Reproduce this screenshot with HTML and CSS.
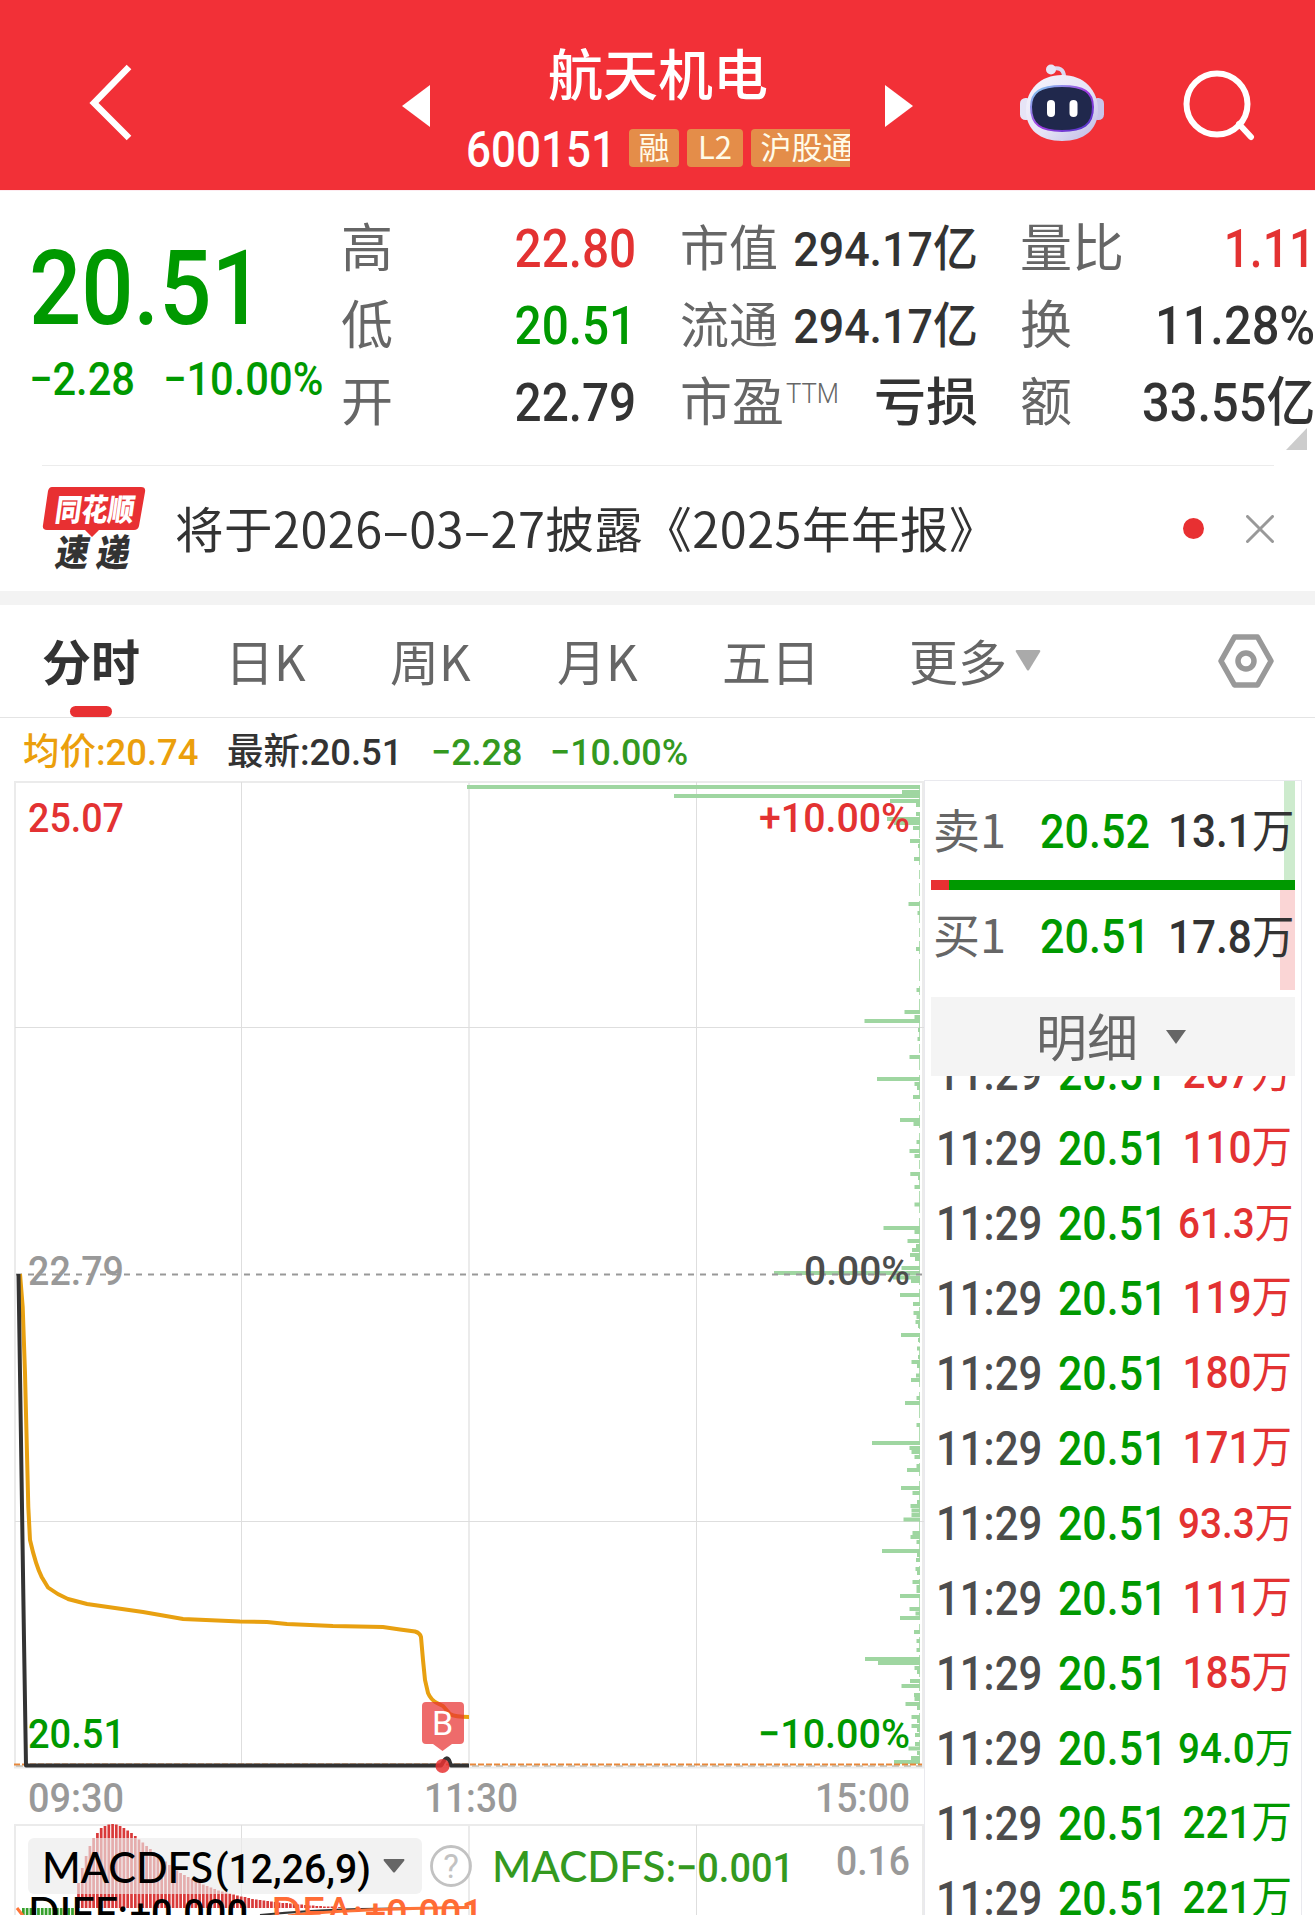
FILE: index.html
```html
<!DOCTYPE html>
<html lang="zh-CN">
<head>
<meta charset="utf-8">
<title>航天机电 600151</title>
<link rel="stylesheet" href="styles.css">
</head>
<body>
<header class="topbar">
  <svg class="back" viewBox="0 0 50 90" width="50" height="90"><path d="M43 10 8 46 43 81" fill="none" stroke="#fff" stroke-width="6.5"/></svg>
  <svg class="prev" viewBox="0 0 28 42" width="28" height="42"><path d="M28 0V42L0 21z" fill="#fff"/></svg>
  <div class="stock">
    <h1 class="stock-name">航天机电</h1>
    <div class="stock-meta">
      <span class="stock-code"><span class="sq">600151</span></span>
      <span class="badge b1">融</span><span class="badge b2">L2</span><span class="badge b3">沪股通</span>
    </div>
  </div>
  <svg class="next" viewBox="0 0 28 42" width="28" height="42"><path d="M0 0V42L28 21z" fill="#fff"/></svg>
  <svg class="robot" viewBox="0 0 84 78" width="84" height="78">
    <defs>
      <linearGradient id="shell" x1="0" y1="0" x2="1" y2="1"><stop offset="0" stop-color="#f6f5fd"/><stop offset=".55" stop-color="#e6e3f6"/><stop offset="1" stop-color="#bdb8e4"/></linearGradient>
      <linearGradient id="rim" x1="0" y1="0" x2="1" y2="1"><stop offset="0" stop-color="#7fdcf2"/><stop offset=".5" stop-color="#a23be0"/><stop offset="1" stop-color="#4636c8"/></linearGradient>
    </defs>
    <path d="M31 5c8-2 13 0 13 8" fill="none" stroke="#dcd9f1" stroke-width="4"/>
    <circle cx="31" cy="5.500" r="5" fill="#e7e5f6"/>
    <rect x="0" y="34" width="12" height="22" rx="5.500" fill="#e6e4f6"/>
    <rect x="72" y="34" width="12" height="22" rx="5.500" fill="#c9c5ea"/>
    <path d="M42 11C64 11 78 26 78 46S64 77 42 77 6 66 6 46 20 11 42 11z" fill="url(#shell)"/>
    <path d="M42 22C64 22 73 28 73 43 73 61 63 67 42 67S11 61 11 43C11 28 20 22 42 22z" fill="#20284c" stroke="url(#rim)" stroke-width="2"/>
    <rect x="27" y="36" width="8" height="17" rx="4" fill="#fff"/><rect x="49.500" y="36" width="8" height="17" rx="4" fill="#fff"/>
  </svg>
  <svg class="search" viewBox="0 0 74 72" width="74" height="72"><g fill="none" stroke="#fff" stroke-width="6"><ellipse cx="35" cy="35" rx="30.500" ry="30.500"/><path d="M57 55 69 68" stroke-linecap="round"/></g></svg>
</header>

<section class="quote">
  <div class="last">
    <div class="last-price down"><span class="sq">20.51</span></div>
    <div class="last-change down"><span class="sq chg-a">−2.28</span><span class="sq chg-b">−10.00%</span></div>
  </div>
  <dl class="stats s1">
    <dt>高</dt><dd class="up"><span class="sr">22.80</span></dd>
    <dt>低</dt><dd class="down"><span class="sr">20.51</span></dd>
    <dt>开</dt><dd><span class="sr">22.79</span></dd>
  </dl>
  <dl class="stats s2">
    <dt class="small">市值</dt><dd class="small"><span class="sr">294.17<i>亿</i></span></dd>
    <dt class="small">流通</dt><dd class="small"><span class="sr">294.17<i>亿</i></span></dd>
    <dt>市盈<sup>TTM</sup></dt><dd>亏损</dd>
  </dl>
  <dl class="stats s3">
    <dt>量比</dt><dd class="up ratio"><span class="sr">1.11</span></dd>
    <dt>换</dt><dd><span class="sr">11.28%</span></dd>
    <dt>额</dt><dd><span class="sr">33.55<i>亿</i></span></dd>
  </dl>
  <svg class="expand" viewBox="0 0 21 22" width="21" height="22"><path d="M21 0V22H0z" fill="#ccc"/></svg>
</section>

<section class="notice">
  <svg class="notice-logo" viewBox="0 0 104 86" width="104" height="86">
    <path d="M10 1H99q5 0 4 5L97 40q-1 4-5 4H57L50 51 43 44H5q-5 0-4-5L6 5q1-4 4-4z" fill="#e83032"/>
    <text class="logo-top" transform="translate(12 35) skewX(-8)" textLength="79" lengthAdjust="spacingAndGlyphs">同花顺</text>
    <text class="logo-bottom" transform="translate(12 80) skewX(-10)" textLength="33" lengthAdjust="spacingAndGlyphs">速</text>
    <text class="logo-bottom" transform="translate(53 80) skewX(-10)" textLength="33" lengthAdjust="spacingAndGlyphs">递</text>
  </svg>
  <p class="notice-text">将于2026<b>–</b>03<b>–</b>27披露《2025年年报》</p>
  <span class="notice-dot"></span>
  <svg class="notice-close" viewBox="0 0 28 28" width="28" height="28"><path d="M1.500 1.500 26.500 26.500M26.500 1.500 1.500 26.500" stroke="#999" stroke-width="3" stroke-linecap="round"/></svg>
</section>

<nav class="tabs">
  <a class="tab active">分时</a><a class="tab">日K</a><a class="tab">周K</a><a class="tab">月K</a><a class="tab">五日</a>
  <a class="tab more">更多<svg viewBox="0 0 26 21" width="26" height="21"><path d="M2 0H24q2 0 1 2L14 20q-1 1-2 0L1 2Q0 0 2 0z" fill="#aaa"/></svg></a>
  <svg class="gear" viewBox="0 0 56 56" width="56" height="56"><g fill="none" stroke="#999" stroke-width="5.500"><path d="M16.500 4H39.500L53 28 39.500 52H16.500L3 28z" stroke-linejoin="round"/><circle cx="28" cy="28" r="8"/></g></svg>
</nav>

<div class="legend">
  <span class="avg"><span class="sq">均价:20.74</span></span>
  <span><span class="sq">最新:20.51</span></span>
  <span class="soft"><span class="sq">−2.28</span></span>
  <span class="soft"><span class="sq">−10.00%</span></span>
</div>

<main class="board">
<svg class="chart" viewBox="0 780 924 1135" width="924" height="1135">
  <g fill="none" stroke="#ebebeb" stroke-width="2">
    <path d="M14 782H924M15 782V1767M469 782V1767M923 782V1767M14 1767.500H924M14 1825H924M15 1825V1915M469 1825V1915M923 1825V1915" />
    <path d="M241.500 782V1767M696.500 782V1767M15 1027.500H924M15 1521.500H924M241.500 1825V1915M696.500 1825V1915" stroke="#dedede" stroke-width="1"/>
  </g>
  <path stroke="#9fd6a1" stroke-width="4" d="M920 787h-453M920 792h-18M920 796h-246M920 801h-30M920 805h-4M920 814h-4M920 819h-33M920 823h-26M920 828h-7M920 841h-10M920 846h-2M920 859h-6M920 904h-11.500M920 913h-2.500M920 949h-4M920 990h-3.500M920 1012h-15.500M920 1017h-5.500M920 1021h-55.500M920 1030h-2M920 1039h-2.500M920 1057h-10.500M920 1079h-43M920 1084h-5.500M920 1088h-3M920 1097h-7M920 1120h-20M920 1124h-6.500M920 1142h-3.500M920 1151h-10.500M920 1156h-5.500M920 1174h-9.700M920 1178h-2M920 1187h-5.500M920 1204.500h-5.500M920 1228h-36.500M920 1232h-5.500M920 1241h-12.500M920 1246h-4M920 1250h-8M920 1255h-10M920 1259h-5M920 1268h-18.500M920 1273h-146M920 1277.500h-27M920 1281h-9M920 1295h-20M920 1304h-7M920 1313h-6.500M920 1317h-3.500M920 1322h-4.500M920 1326h-2M920 1335h-19M920 1340h-2M920 1348.500h-3M920 1357h-2M920 1362h-8.500M920 1366h-3M920 1375.500h-4M920 1380h-9M920 1398h-3.500M920 1403h-15M920 1425h-3.500M920 1443h-48M920 1448h-10.500M920 1452h-8.500M920 1457h-5.500M920 1466h-3.500M920 1470h-13M920 1488h-19M920 1493h-7.500M920 1502h-3M920 1506h-9.500M920 1510.500h-8.500M920 1515h-8.500M920 1519.500h-16.500M920 1533h-7.500M920 1537h-9.500M920 1542h-3.500M920 1551h-38M920 1555h-3M920 1560h-4M920 1569h-4.500M920 1573h-3M920 1582h-7.500M920 1587h-3.500M920 1591h-3.500M920 1596h-20M920 1609h-10.500M920 1613.500h-4.500M920 1618h-20M920 1632h-6M920 1641h-3.500M920 1650h-3.500M920 1659h-55M920 1663h-42M920 1668h-5.500M920 1672h-3M920 1681h-10M920 1686h-18.500M920 1695h-6M920 1699h-5.500M920 1704h-14.500M920 1708h-3M920 1717h-8.500M920 1721h-3M920 1726h-8.500M920 1730h-3M920 1735h-5M920 1744h-5M920 1748.500h-11.500M920 1753h-3M920 1758h-9M920 1762h-26"/>
  <path d="M919.500 785V1765" stroke="#9fd6a1" stroke-dasharray="22 5 9 4 13 5" opacity=".8"/>
  <path d="M16 1274.500H922" stroke="#999" stroke-width="2" stroke-dasharray="6 6"/>
  <path d="M14 1764.500H922" stroke="#e8873a" stroke-width="2" stroke-dasharray="6 2"/>
  <path d="M16 1766H922" stroke="#aaa08e" stroke-width="1" stroke-dasharray="7 5"/>
  <path d="M20 1274 22.700 1307 25 1373 28.300 1507 30 1540Q36 1566 41.700 1577L48 1587.500Q58 1595 68 1599L87 1604 143 1612 183 1619 240 1621.500 267 1622 287 1624 333 1626 383 1627 400 1629.500 415 1631.500Q420 1633 421 1637L423 1660 425 1680 428 1693Q431 1700 437 1703L443 1706 450 1714Q455 1717 469 1717" fill="none" stroke="#e8a010" stroke-width="4"/>
  <path d="M18.500 1274 24 1640 26 1765.500H441L444.500 1760Q447 1756.500 449 1760L451 1765.500H469" fill="none" stroke="#333" stroke-width="4" stroke-linejoin="round"/>
  <g fill="#e83232"><path d="M426 1702H460q4 0 4 4V1740q0 4-4 4H452L442.500 1751 433 1744H426q-4 0-4-4V1706q0-4 4-4z" opacity=".72"/><circle cx="442.500" cy="1766" r="7" opacity=".85"/></g>
  <text class="mark" x="442.500" y="1735" text-anchor="middle">B</text>

  <g class="axis">
    <text class="t-up" x="28" y="832" textLength="96" lengthAdjust="spacingAndGlyphs">25.07</text>
    <text class="t-up" x="759" y="832" textLength="151" lengthAdjust="spacingAndGlyphs">+10.00%</text>
    <text class="t-mute" x="28" y="1285" textLength="96" lengthAdjust="spacingAndGlyphs">22.79</text>
    <text class="t-dark" x="804" y="1285" textLength="106" lengthAdjust="spacingAndGlyphs">0.00%</text>
    <text class="t-down" x="28" y="1748" textLength="97" lengthAdjust="spacingAndGlyphs">20.51</text>
    <text class="t-down" x="758" y="1748" textLength="152" lengthAdjust="spacingAndGlyphs">−10.00%</text>
    <text class="t-mute" x="28" y="1812" textLength="96" lengthAdjust="spacingAndGlyphs">09:30</text>
    <text class="t-mute" x="424" y="1812" textLength="94" lengthAdjust="spacingAndGlyphs">11:30</text>
    <text class="t-mute" x="815" y="1812" textLength="95" lengthAdjust="spacingAndGlyphs">15:00</text>
  </g>

  <path stroke="#d93a3a" stroke-width="2.700" d="M78.500 1908V1883M82.300 1908V1868M86.100 1908V1856M89.900 1908V1846M93.600 1908V1838M97.400 1908V1833M101.200 1908V1828M105 1908V1826M108.800 1908V1824.500M112.600 1908V1824M116.300 1908V1824.500M120.100 1908V1826M123.900 1908V1828M127.700 1908V1830.500M131.500 1908V1833M135.300 1908V1836M139 1908V1839.500M142.800 1908V1842.500M146.600 1908V1846M150.400 1908V1849M154.200 1908V1852M157.900 1908V1855M161.700 1908V1858M165.500 1908V1861.500M169.300 1908V1865M173.100 1908V1868M176.900 1908V1870.500M180.600 1908V1873M184.400 1908V1875M188.200 1908V1877M192 1908V1879M195.800 1908V1881M199.600 1908V1882.500M203.300 1908V1884.500M207.100 1908V1886M210.900 1908V1887.500M214.700 1908V1889M218.500 1908V1890.500M222.300 1908V1891.500M226 1908V1892.500M229.800 1908V1893.500M233.600 1908V1894.500M237.400 1908V1895.500M241.200 1908V1896.500M245 1908V1897M248.700 1908V1898M252.500 1908V1899M256.300 1908V1899.500M260.100 1908V1900M263.900 1908V1900.500M267.700 1908V1901M271.400 1908V1901.500M275.200 1908V1902M279 1908V1902.500M282.800 1908V1903M286.600 1908V1903M290.400 1908V1903.500M294.100 1908V1904M297.900 1908V1904.500M301.700 1908V1904.500M305.500 1908V1905M309.300 1908V1905.500M313.100 1908V1905.500M316.800 1908V1906M320.600 1908V1906M324.400 1908V1906.500M328.200 1908V1906.500M332 1908V1906.500M335.700 1908V1907M339.500 1908V1907M343.300 1908V1907"/>
  <path d="M22 1911.500H74" stroke="#36a02c" stroke-width="7" stroke-dasharray="2.700 1.080"/>
  <path d="M260 1915Q310 1910 360 1909L469 1907.500" fill="none" stroke="#333" stroke-width="2"/>
  <path d="M17 1908 24 1917M288 1916Q340 1909 469 1907.500" fill="none" stroke="#ff7438" stroke-width="3"/>
  <rect x="28" y="1838" width="394" height="56" rx="6" fill="#ebebeb" fill-opacity=".65"/>
  <text class="ind-word" x="42" y="1883" textLength="171" lengthAdjust="spacingAndGlyphs">MACDFS</text>
  <text class="ind-num" x="215" y="1883" textLength="156" lengthAdjust="spacingAndGlyphs">(12,26,9)</text>
  <path d="M384 1859H404q1 1 0 2L395 1872q-1 1-2 0L384 1861q-1-1 0-2z" fill="#666"/>
  <circle cx="451" cy="1866" r="19.500" fill="none" stroke="#c2c2c2" stroke-width="2.800"/>
  <text class="help" x="451" y="1877.500" text-anchor="middle">?</text>
  <g fill="#34991f">
    <text class="ind-word" x="492" y="1882" textLength="184" lengthAdjust="spacingAndGlyphs">MACDFS:</text>
    <text class="ind-num" x="676" y="1882" textLength="118" lengthAdjust="spacingAndGlyphs">−0.001</text>
  </g>
  <text class="ind-num t-mute" x="836" y="1875" textLength="74" lengthAdjust="spacingAndGlyphs">0.16</text>
  <text class="ind-word" x="28" y="1928" textLength="100" lengthAdjust="spacingAndGlyphs">DIFF:</text>
  <text class="ind-num" x="130" y="1928" textLength="118" lengthAdjust="spacingAndGlyphs">+0.000</text>
  <g fill="#ff6b35">
    <text class="ind-word" x="271" y="1928" textLength="92" lengthAdjust="spacingAndGlyphs">DEA:</text>
    <text class="ind-num" x="365" y="1928" textLength="118" lengthAdjust="spacingAndGlyphs">+0.001</text>
  </g>
</svg>

<aside class="book">
  <div class="level sell"><span class="side">卖1</span><span class="px down"><span class="sq">20.52</span></span><span class="qty"><span class="sr">13.1<i>万</i></span></span></div>
  <div class="ratio-bar"></div>
  <div class="level buy"><span class="side">买1</span><span class="px down"><span class="sq">20.51</span></span><span class="qty"><span class="sr">17.8<i>万</i></span></span></div>
  <div class="detail">明细<svg viewBox="0 0 20 14" width="20" height="14"><path d="M0 0H20L10 14z" fill="#666"/></svg></div>
  <div class="ticks"><div class="ticks-inner">
    <div class="tick"><time><span class="sq">11:29</span></time><span class="px down"><span class="sq">20.51</span></span><span class="vol up"><span class="sr">267<i>万</i></span></span></div>
    <div class="tick"><time><span class="sq">11:29</span></time><span class="px down"><span class="sq">20.51</span></span><span class="vol up"><span class="sr">110<i>万</i></span></span></div>
    <div class="tick"><time><span class="sq">11:29</span></time><span class="px down"><span class="sq">20.51</span></span><span class="vol dec up"><span class="sr">61.3<i>万</i></span></span></div>
    <div class="tick"><time><span class="sq">11:29</span></time><span class="px down"><span class="sq">20.51</span></span><span class="vol up"><span class="sr">119<i>万</i></span></span></div>
    <div class="tick"><time><span class="sq">11:29</span></time><span class="px down"><span class="sq">20.51</span></span><span class="vol up"><span class="sr">180<i>万</i></span></span></div>
    <div class="tick"><time><span class="sq">11:29</span></time><span class="px down"><span class="sq">20.51</span></span><span class="vol up"><span class="sr">171<i>万</i></span></span></div>
    <div class="tick"><time><span class="sq">11:29</span></time><span class="px down"><span class="sq">20.51</span></span><span class="vol dec up"><span class="sr">93.3<i>万</i></span></span></div>
    <div class="tick"><time><span class="sq">11:29</span></time><span class="px down"><span class="sq">20.51</span></span><span class="vol up"><span class="sr">111<i>万</i></span></span></div>
    <div class="tick"><time><span class="sq">11:29</span></time><span class="px down"><span class="sq">20.51</span></span><span class="vol up"><span class="sr">185<i>万</i></span></span></div>
    <div class="tick"><time><span class="sq">11:29</span></time><span class="px down"><span class="sq">20.51</span></span><span class="vol dec down"><span class="sr">94.0<i>万</i></span></span></div>
    <div class="tick"><time><span class="sq">11:29</span></time><span class="px down"><span class="sq">20.51</span></span><span class="vol down"><span class="sr">221<i>万</i></span></span></div>
    <div class="tick"><time><span class="sq">11:29</span></time><span class="px down"><span class="sq">20.51</span></span><span class="vol down"><span class="sr">221<i>万</i></span></span></div>
  </div></div>
</aside>
</main>
</body>
</html>
```
FILE: styles.css
```css
* { box-sizing: border-box; margin: 0; padding: 0; }
html, body { width: 1315px; height: 1915px; overflow: hidden; }
body {
  display: flex; flex-direction: column; background: #fff; color: #333;
  font-family: Roboto, "Noto Sans CJK SC", sans-serif;
}
svg { display: block; flex: none; }
i { font-style: normal; font-weight: 400; }
.up { color: #e33232; }
.down { color: #009900; }

/* condensed numerals: .sq keeps the left edge, .sr keeps the right edge */
.sq, .sr { display: inline-block; white-space: nowrap; font-weight: 500; }
.sq { transform: scaleX(.92); transform-origin: left center; }
.sr { transform: scaleX(.92); transform-origin: right center; }

.topbar { flex: none; height: 190px; display: flex; background: #f23037; color: #fff; }
.back { margin: 57px 0 0 86px; }
.prev { margin: 85px 0 0 266px; }
.stock { width: 385px; margin: 0 35px 0 35px; padding-top: 39px; overflow: hidden; }
.stock-name { font: 500 55px/64px "Noto Sans CJK SC", sans-serif; text-align: center; margin-right: -1px; height: 64px; }
.stock-meta { display: flex; height: 40px; margin-top: 26px; }
.stock-code { width: 164px; padding-left: 1px; font-size: 50px; line-height: 42px; }
.stock-code .sq { transform: scaleX(.88); }
.badge { flex: none; height: 38px; margin-right: 8px; border-radius: 4px; background: #e48d49; color: #fffbe8; font: 400 31px/34px "Noto Sans CJK SC", sans-serif; text-align: center; white-space: nowrap; }
.b1 { width: 50px; }
.b2 { width: 56px; }
.b3 { width: 112px; }
.next { margin-top: 85px; }
.robot { margin: 64px 0 0 107px; }
.search { margin: 69px 0 0 78px; }

.quote { position: relative; flex: none; height: 275px; display: flex; border-top: 1px solid #fdecf1; }
.last { width: 341px; padding: 43px 0 0 29px; }
.last-price { font-size: 104px; line-height: 110px; height: 110px; }
.last-price .sq { transform: scaleX(.885); }
.last-change { display: flex; margin-top: 10px; font-size: 46px; line-height: 50px; }
.last-change .sq { transform: scaleX(.905); }
.chg-a { width: 134px; }
.stats { display: grid; grid-template-columns: auto 1fr; grid-auto-rows: 77px; padding-top: 20px; font-size: 53px; line-height: 77px; }
.stats dt { color: #666; font-size: 52px; white-space: nowrap; }
.stats dd { text-align: right; font-weight: 500; white-space: nowrap; font-size: 53px; }
.stats i { font-weight: 500; }
.stats .small { font-size: 49px; }
.stats .small .sr { transform: scaleX(.915); }
.s1 { width: 295px; }
.s1 .sr { transform: scaleX(.9); }
.s2 { width: 298px; margin-left: 44px; grid-template-columns: 94px 204px; }
.s2 dd:last-child { font-size: 52px; }
.s3 { width: 295px; margin-left: 42px; }
.stats .ratio .sr { transform: scaleX(.87); }
.stats sup { display: inline-block; margin-left: 2px; font-size: 27px; font-weight: 300; line-height: 30px; vertical-align: 18px; transform: scaleX(.95); transform-origin: left; }
.expand { position: absolute; right: 8px; bottom: 15px; }

.notice { flex: none; height: 126px; margin: 0 41px 0 42px; border-top: 1px solid #ececec; display: flex; align-items: center; }
.logo-top { font: 900 31px "Noto Sans CJK SC", sans-serif; fill: #fff; }
.logo-bottom { font: 900 37px "Noto Sans CJK SC", sans-serif; fill: #333; }
.notice-text { width: 1037px; padding-left: 29px; font: 400 48.5px/70px "Noto Sans CJK SC", sans-serif; letter-spacing: .5px; padding-bottom: 3px; white-space: nowrap; }
.notice-text b { font-weight: 400; }
.notice-dot { width: 21px; height: 21px; border-radius: 50%; background: #e83032; }
.notice-close { margin-left: auto; }

.tabs { flex: none; height: 127px; border-top: 14px solid #f3f3f3; border-bottom: 1px solid #e4e4e4; padding-left: 42px; display: grid; grid-template-columns: 183px 165px 167px 165px 187px 309px 56px; align-items: center; }
.tab { position: relative; height: 112px; font: 400 49px/109px "Noto Sans CJK SC", sans-serif; color: #666; white-space: nowrap; }
.tab.active { font-weight: 700; color: #333; }
.tab.active::after { content: ""; position: absolute; left: 28px; bottom: 0; width: 42px; height: 11px; border-radius: 6px; background: #e83032; }
.more { display: flex; }
.more svg { margin: 45px 0 0 8px; }

.legend { flex: none; height: 62px; padding: 10px 0 0 23px; display: grid; grid-template-columns: 204px 204px 119px 200px; font-size: 37px; line-height: 50px; }
.legend .sq { transform: scaleX(.985); }
.legend .soft .sq { transform: scaleX(.97); }
.legend .avg { color: #eb9f0c; }
.legend .soft { color: #34991f; }

.board { flex: none; display: flex; height: 1135px; }
.axis { font: 500 41.5px Roboto, sans-serif; }
.t-up { fill: #e33232; }
.t-down { fill: #009900; }
.t-mute { fill: #999; }
.t-dark { fill: #4d4d4d; }
.mark { font: 400 34px Roboto, sans-serif; fill: #fff; }
.ind-word { font: 500 42px Lato, sans-serif; }
.ind-num { font: 500 41.5px Roboto, sans-serif; }
.help { font: 400 33px Roboto, sans-serif; fill: #c2c2c2; }

.book { width: 378px; padding: 0 6px; border: solid #e9e9ee; border-width: 1px 1px 0; display: flex; flex-direction: column; }
.level { flex: none; display: grid; grid-template-columns: 107px 112px 1fr; padding-left: 2px; font-size: 49px; }
.sell { height: 99px; line-height: 101px; background: linear-gradient(#cdebcd, #cdebcd) right / 11px 100% no-repeat; }
.buy { height: 100px; line-height: 94px; background: linear-gradient(#fad5d5, #fad5d5) right / 15px 100% no-repeat; }
.level .px .sq { transform: scaleX(.88); }
.side { font-family: "Noto Sans CJK SC", sans-serif; font-size: 47px; color: #666; margin-top: -4px; }
.qty { text-align: right; font-size: 46px; padding-right: 1px; }
.ratio-bar { flex: none; height: 10px; background: linear-gradient(90deg, #e83032 17.5px, #009900 17.5px); }
.detail { flex: none; height: 79px; margin-top: 7px; padding-right: 4px; background: #f4f4f4; color: #666; display: flex; justify-content: center; align-items: center; font: 400 51px/74px "Noto Sans CJK SC", sans-serif; padding-bottom: 4px; }
.detail svg { margin: 5px 0 0 28px; }
.ticks { flex: 1; overflow: hidden; }
.ticks-inner { margin-top: -40px; }
.tick { display: grid; grid-template-columns: 122px 110px 1fr; height: 75px; line-height: 75px; padding: 0 3px 0 5px; font-size: 49px; }
.tick time { color: #4d4d4d; }
.tick time .sq { transform: scaleX(.855); }
.tick .px .sq { transform: scaleX(.875); }
.vol { text-align: right; font-size: 44px; }
.vol.dec { font-size: 42px; }
```
